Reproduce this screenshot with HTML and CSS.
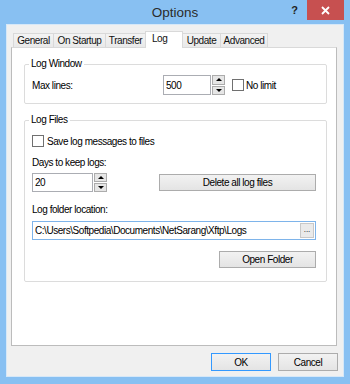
FILE: index.html
```html
<!DOCTYPE html>
<html lang="en">
<head>
  <meta charset="UTF-8">
  <title>Options</title>
  <link rel="stylesheet" href="styles.css">
</head>
<body>
  <div class="window">
    <div class="titlebar">
      <span></span>
      <span class="title">Options</span>
      <div class="caption-btns">
        <span class="help">?</span>
        <span class="close">
          <svg width="9" height="9" viewBox="0 0 9 9"><path d="M1 1 L8 8 M8 1 L1 8" stroke="#fff" stroke-width="1.8"/></svg>
        </span>
      </div>
    </div>

    <div class="client">
      <div class="tabs">
        <div class="tab tab-general">General</div>
        <div class="tab tab-startup">On Startup</div>
        <div class="tab tab-transfer">Transfer</div>
        <div class="tab tab-log active">Log</div>
        <div class="tab tab-update">Update</div>
        <div class="tab tab-advanced">Advanced</div>
      </div>

      <div class="panel">
        <fieldset class="group">
          <legend>Log Window</legend>
          <div class="row">
            <span class="lbl-max">Max lines:</span>
            <div class="spin spin-max">
              <input type="text" value="500">
              <div class="spin-btns"><span class="up"></span><span class="down"></span></div>
            </div>
            <label class="check check-nolimit"><span class="box"></span>No limit</label>
          </div>
        </fieldset>

        <fieldset class="group group-files">
          <legend>Log Files</legend>
          <label class="check check-save"><span class="box"></span>Save log messages to files</label>
          <div class="days-label">Days to keep logs:</div>
          <div class="days-row">
            <div class="spin spin-days">
              <input type="text" value="20">
              <div class="spin-btns"><span class="up"></span><span class="down"></span></div>
            </div>
            <button class="btn btn-delete">Delete all log files</button>
          </div>
          <div class="folder-label">Log folder location:</div>
          <div class="path">
            <input type="text" value="C:\Users\Softpedia\Documents\NetSarang\Xftp\Logs">
            <span class="browse">...</span>
          </div>
          <div class="open-row">
            <button class="btn btn-open">Open Folder</button>
          </div>
        </fieldset>
      </div>

      <div class="footer">
        <button class="btn btn-default">OK</button>
        <button class="btn">Cancel</button>
      </div>
    </div>
  </div>
</body>
</html>
```

FILE: styles.css
```css
* {
  box-sizing: border-box;
}

body {
  margin: 0;
  font-family: "Liberation Sans", Arial, sans-serif;
  font-size: 10px;
  letter-spacing: -0.45px;
  color: #000;
}

.window {
  width: 350px;
  height: 384px;
  background: #88c0f2; /* win8 light blue frame */
  display: flex;
  flex-direction: column;
}

/* title bar */
.titlebar {
  height: 25px;
  display: grid;
  grid-template-columns: 1fr auto 1fr;
  align-items: start;
}

.title {
  font-size: 13.5px;
  letter-spacing: 0;
  color: #2b2b2b;
  line-height: 26px;
}

.caption-btns {
  display: flex;
  justify-content: flex-end;
  padding-right: 6px;
}

.help {
  font-weight: bold;
  font-size: 11px;
  letter-spacing: 0;
  color: #222;
  line-height: 20px;
  margin-right: 9px;
}

.close {
  width: 37px;
  height: 20px;
  background: #c75050;
  display: flex;
  align-items: center;
  justify-content: center;
}

/* client area */
.client {
  flex: 1;
  margin: 0 7px 8px 7px;
  background: #f0f0f0;
  box-shadow: 0 0 0 1px #d6e8f8;
  padding-top: 6px;
  display: flex;
  flex-direction: column;
}

.tabs {
  display: flex;
  align-items: flex-end;
  height: 16px;
  margin-left: 6px;
}

.tab {
  height: 14px;
  line-height: 14px;
  white-space: nowrap;
  text-align: center;
  border: 1px solid #d9d9d9;
  border-bottom: none;
  border-right: none;
  background: linear-gradient(#f3f3f3, #e9e9e9);
  color: #111;
}

.tab-general { width: 40px; }
.tab-startup { width: 52px; }
.tab-transfer { width: 40px; }
.tab-log { width: 38px; }
.tab-update { width: 37px; border-left: none; }
.tab-advanced { width: 48px; border-right: 1px solid #d9d9d9; }

.tab.active {
  height: 17px;
  margin-bottom: -1px;
  background: #fff;
  position: relative;
  z-index: 1;
  border-right: 1px solid #d9d9d9;
  text-align: left;
  padding-left: 6px;
  line-height: 14px;
}

.panel {
  height: 299px;
  margin: 0 6px 0 4px;
  background: #fff;
  border: 1px solid #bcbcbc;
  border-top-color: #d9d9d9;
  padding: 9px 9px 0 12px;
}

/* group boxes */
.group {
  margin: 0;
  min-width: 0;
  border: 1px solid #dcdcdc;
  border-radius: 2px;
  padding: 4px 10px 8px 7px;
}

.group legend {
  padding: 0 2px;
  margin-left: -3px;
  line-height: 14px;
}

.group-files {
  margin-top: 9px;
  padding-bottom: 13px;
}

.row {
  display: flex;
  align-items: center;
}

.lbl-max {
  width: 131px;
}

input {
  font: inherit;
  letter-spacing: inherit;
  color: #000;
  border: 1px solid #abadb3;
  padding: 0 2px;
  outline: none;
  background: #fff;
}

.spin {
  display: flex;
  align-items: stretch;
  height: 20px;
}

.spin-max input { width: 48px; }
.spin-days input { width: 61px; height: 19px; }
.spin-days { height: 19px; }

.spin-btns {
  width: 13px;
  margin-left: 1px;
  display: flex;
  flex-direction: column;
  gap: 1px;
}

.spin-btns span {
  flex: 1;
  background: #e6e6e6;
  border: 1px solid #acacac;
  display: flex;
  align-items: center;
  justify-content: center;
}

.spin-btns .up::after {
  content: "";
  border-left: 3px solid transparent;
  border-right: 3px solid transparent;
  border-bottom: 3px solid #000;
}

.spin-btns .down::after {
  content: "";
  border-left: 3px solid transparent;
  border-right: 3px solid transparent;
  border-top: 3px solid #000;
}

.check {
  display: flex;
  align-items: center;
  gap: 3px;
}

.check .box {
  width: 12px;
  height: 12px;
  border: 1px solid #707070;
  background: #fff;
}

.check-nolimit {
  margin-left: 7px;
  gap: 2px;
}

.check-save {
  margin-top: 3px;
  height: 14px;
}

.days-label {
  margin-top: 8px;
  line-height: 14px;
}

.days-row {
  margin-top: 3px;
  display: flex;
  align-items: center;
  justify-content: space-between;
}

.btn {
  font: inherit;
  letter-spacing: inherit;
  color: #000;
  background: linear-gradient(#f2f2f2, #e4e4e4);
  border: 1px solid #acacac;
  padding: 0;
  height: 17px;
}

.btn-delete {
  width: 157px;
}

.folder-label {
  margin-top: 11px;
  line-height: 14px;
}

.path {
  margin-top: 4px;
  height: 19px;
  display: flex;
  align-items: center;
  border: 1px solid #7eb4ea;
  background: #fff;
}

.path input {
  flex: 1;
  min-width: 0;
  border: none;
  height: 17px;
}

.browse {
  width: 14px;
  height: 15px;
  margin-right: 1px;
  background: #eaeaea;
  border: 1px solid #c8c8c8;
  font-size: 8px;
  letter-spacing: 0;
  line-height: 12px;
  text-align: center;
}

.open-row {
  margin-top: 11px;
  display: flex;
  justify-content: flex-end;
}

.btn-open {
  width: 97px;
}

/* dialog buttons */
.footer {
  display: flex;
  justify-content: flex-end;
  gap: 7px;
  padding: 7px 5px 0 0;
}

.footer .btn {
  width: 60px;
  height: 18px;
}

.btn-default {
  border-color: #3399ff;
}
```
